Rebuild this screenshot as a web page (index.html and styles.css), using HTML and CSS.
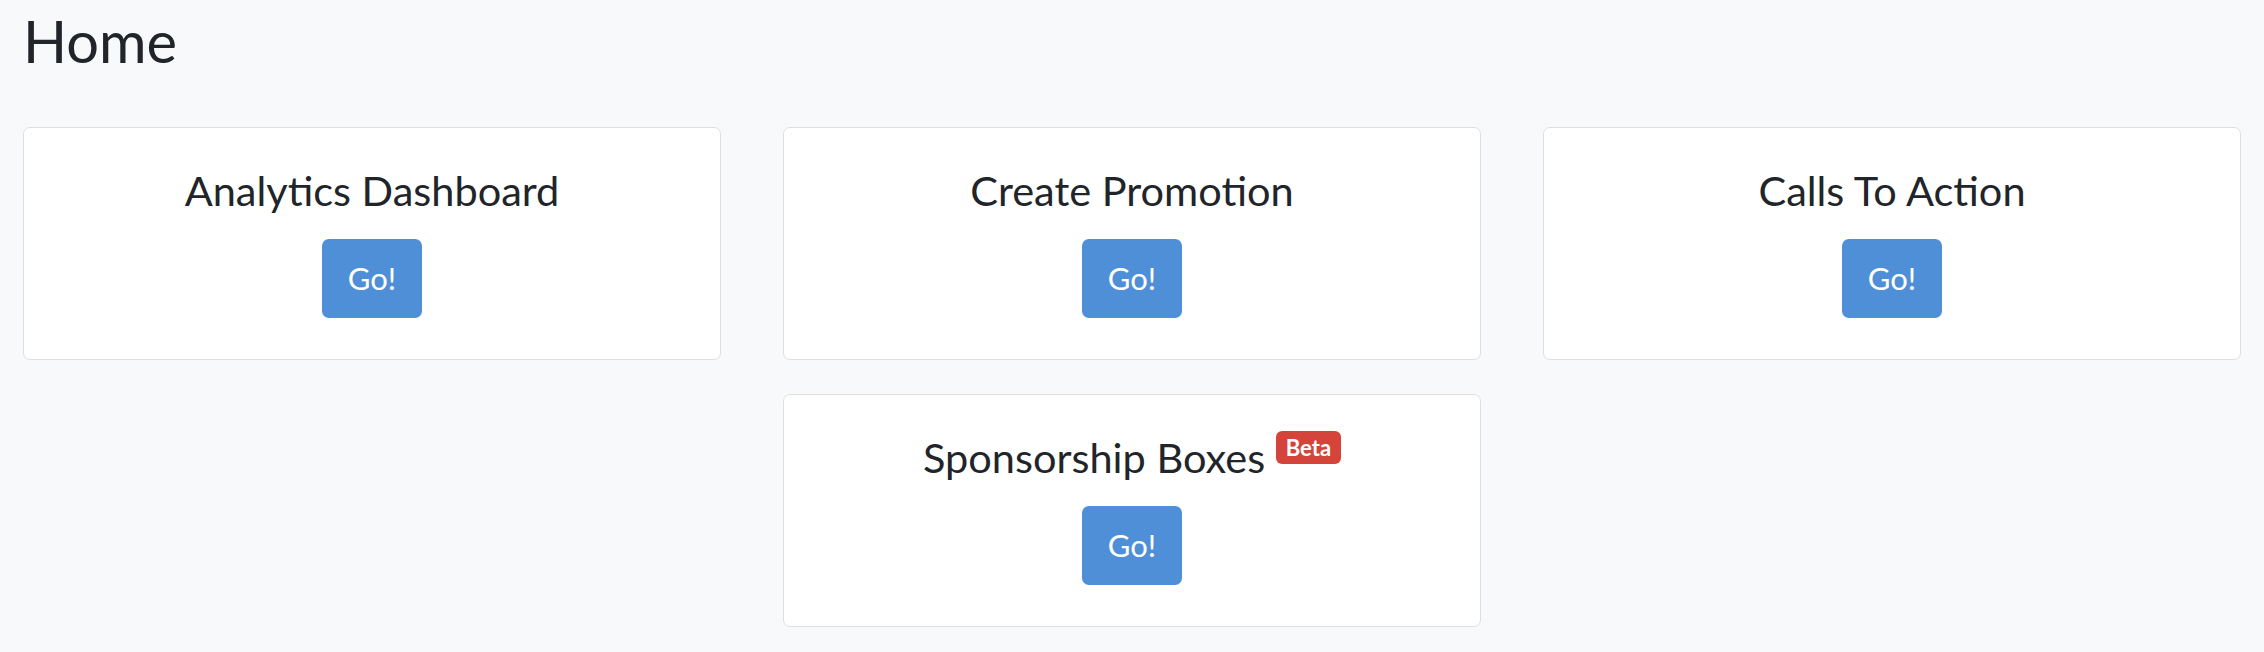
FILE: index.html
```html
<!DOCTYPE html>
<html lang="en">
<head>
<meta charset="utf-8">
<title>Home</title>
<link rel="stylesheet" href="styles.css">
</head>
<body>
<div class="page">
  <h1 class="page-title">Home</h1>
  <div class="grid">
    <div class="card">
      <h3 class="card-title">Analytics Dashboard</h3>
      <a class="btn" href="#">Go!</a>
    </div>
    <div class="card">
      <h3 class="card-title">Create Promotion</h3>
      <a class="btn" href="#">Go!</a>
    </div>
    <div class="card">
      <h3 class="card-title">Calls To Action</h3>
      <a class="btn" href="#">Go!</a>
    </div>
    <div class="card card-center">
      <h3 class="card-title">Sponsorship Boxes <sup class="badge">Beta</sup></h3>
      <a class="btn" href="#">Go!</a>
    </div>
  </div>
</div>
</body>
</html>
```
FILE: styles.css
```css
html, body {
  margin: 0;
  padding: 0;
}
body {
  background: #f8f9fa;
  font-family: Lato, "Noto Sans", sans-serif;
  color: #212529;
  width: 2264px;
  height: 652px;
  overflow: hidden;
}
.page {
  padding: 0 23px;
}
.page-title {
  margin: 6px 0 0;
  font-size: 57.8px;
  font-weight: 400;
  line-height: 1.2;
  height: 121px;
}
.grid {
  display: grid;
  grid-template-columns: repeat(3, 698px);
  column-gap: 62px;
  row-gap: 34px;
}
.card {
  background: #fff;
  border: 1.5px solid #dedfe1;
  border-radius: 7px;
  height: 233px;
  box-sizing: border-box;
  padding-top: 38px;
  text-align: center;
}
.card-center {
  grid-column: 2;
}
.card-title {
  margin: 0 0 25px;
  font-size: 41.5px;
  font-weight: 400;
  line-height: 48px;
  height: 48px;
}
.badge {
  display: inline-block;
  background: #d5443b;
  color: #fff;
  font-size: 22px;
  font-weight: 700;
  line-height: 1;
  padding: 5.5px 10px;
  border-radius: 6px;
  vertical-align: top;
  position: relative;
  top: -2px;
}
.btn {
  display: inline-block;
  background: #4f8fd7;
  color: #fff;
  text-decoration: none;
  font-size: 31px;
  line-height: 45px;
  padding: 17px 26px;
  border-radius: 7px;
}
```
